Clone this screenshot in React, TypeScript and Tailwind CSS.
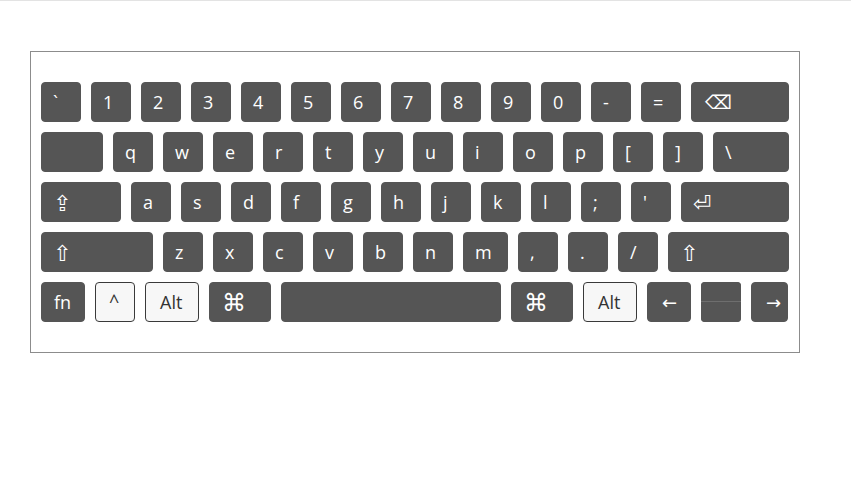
import React from "react";

type K = { label?: string; w: number; light?: boolean; big?: string };

const rows: K[][] = [
  [
    { label: "`", w: 40 },
    { label: "1", w: 40 },
    { label: "2", w: 40 },
    { label: "3", w: 40 },
    { label: "4", w: 40 },
    { label: "5", w: 40 },
    { label: "6", w: 40 },
    { label: "7", w: 40 },
    { label: "8", w: 40 },
    { label: "9", w: 40 },
    { label: "0", w: 40 },
    { label: "-", w: 40 },
    { label: "=", w: 40 },
    { label: "⌫", w: 98, big: "text-[19px] pl-[13px]" },
  ],
  [
    { label: "", w: 62 },
    { label: "q", w: 40 },
    { label: "w", w: 40 },
    { label: "e", w: 40 },
    { label: "r", w: 40 },
    { label: "t", w: 40 },
    { label: "y", w: 40 },
    { label: "u", w: 40 },
    { label: "i", w: 40 },
    { label: "o", w: 40 },
    { label: "p", w: 40 },
    { label: "[", w: 40 },
    { label: "]", w: 40 },
    { label: "\\", w: 76 },
  ],
  [
    { label: "⇪", w: 80, big: "text-[22px] pl-[11px]" },
    { label: "a", w: 40 },
    { label: "s", w: 40 },
    { label: "d", w: 40 },
    { label: "f", w: 40 },
    { label: "g", w: 40 },
    { label: "h", w: 40 },
    { label: "j", w: 40 },
    { label: "k", w: 40 },
    { label: "l", w: 40 },
    { label: ";", w: 40 },
    { label: "'", w: 40 },
    { label: "⏎", w: 108, big: "text-[22px] pl-[11px]" },
  ],
  [
    { label: "⇧", w: 112, big: "text-[22px] pl-[11px]" },
    { label: "z", w: 40 },
    { label: "x", w: 40 },
    { label: "c", w: 40 },
    { label: "v", w: 40 },
    { label: "b", w: 40 },
    { label: "n", w: 40 },
    { label: "m", w: 45 },
    { label: ",", w: 40 },
    { label: ".", w: 40 },
    { label: "/", w: 40 },
    { label: "⇧", w: 121, big: "text-[22px] pl-[11px]" },
  ],
];

function Key({ label, w, light, big }: K) {
  const base =
    "flex h-[40px] shrink-0 items-center rounded-[4px] border leading-none " +
    (big ? big : "text-[18px] pl-[11px]");
  return (
    <div
      style={{ width: w }}
      className={
        light
          ? base + " border-[#3a3a3a] bg-[#f7f7f7] text-[#333]"
          : base + " border-[#555555] bg-[#555555] text-white"
      }
    >
      {label}
    </div>
  );
}

export default function App() {
  return (
    <div
      className="min-h-[504px] bg-white"
      style={{ fontFamily: '"Open Sans", "DejaVu Sans", sans-serif' }}
    >
      <div className="h-px w-full bg-[#e3e3e3]" />
      <div className="ml-[30px] mt-[50px] w-[770px] border border-[#8c8c8c] px-[10px] py-[30px]">
        <div className="flex flex-col gap-[10px]">
          {rows.map((r, i) => (
            <div key={i} className="flex gap-[10px]">
              {r.map((k, j) => (
                <Key key={j} {...k} />
              ))}
            </div>
          ))}
          <div className="flex gap-[10px]">
            <Key label="fn" w={44} big="text-[18px] pl-[12px]" />
            <div className="flex h-[40px] w-[40px] shrink-0 items-start rounded-[4px] border border-[#3a3a3a] bg-[#f7f7f7] pl-[13px] pt-[9px] text-[18px] leading-none text-[#333]">
              ^
            </div>
            <Key label="Alt" w={54} light big="text-[18px] pl-[14px]" />
            <Key label="⌘" w={62} big="text-[24px] pl-[12px]" />
            <Key label="" w={220} />
            <Key label="⌘" w={62} big="text-[24px] pl-[12px]" />
            <Key label="Alt" w={54} light big="text-[18px] pl-[14px]" />
            <Key label="←" w={44} big="text-[18px] pl-[14px]" />
            <div className="flex h-[40px] w-[40px] shrink-0 flex-col gap-px overflow-hidden rounded-[4px] bg-[#6e6e6e]">
              <div className="h-[19px] bg-[#555555]" />
              <div className="h-[20px] bg-[#555555]" />
            </div>
            <Key label="→" w={37} big="text-[18px] pl-[14px]" />
          </div>
        </div>
      </div>
    </div>
  );
}
